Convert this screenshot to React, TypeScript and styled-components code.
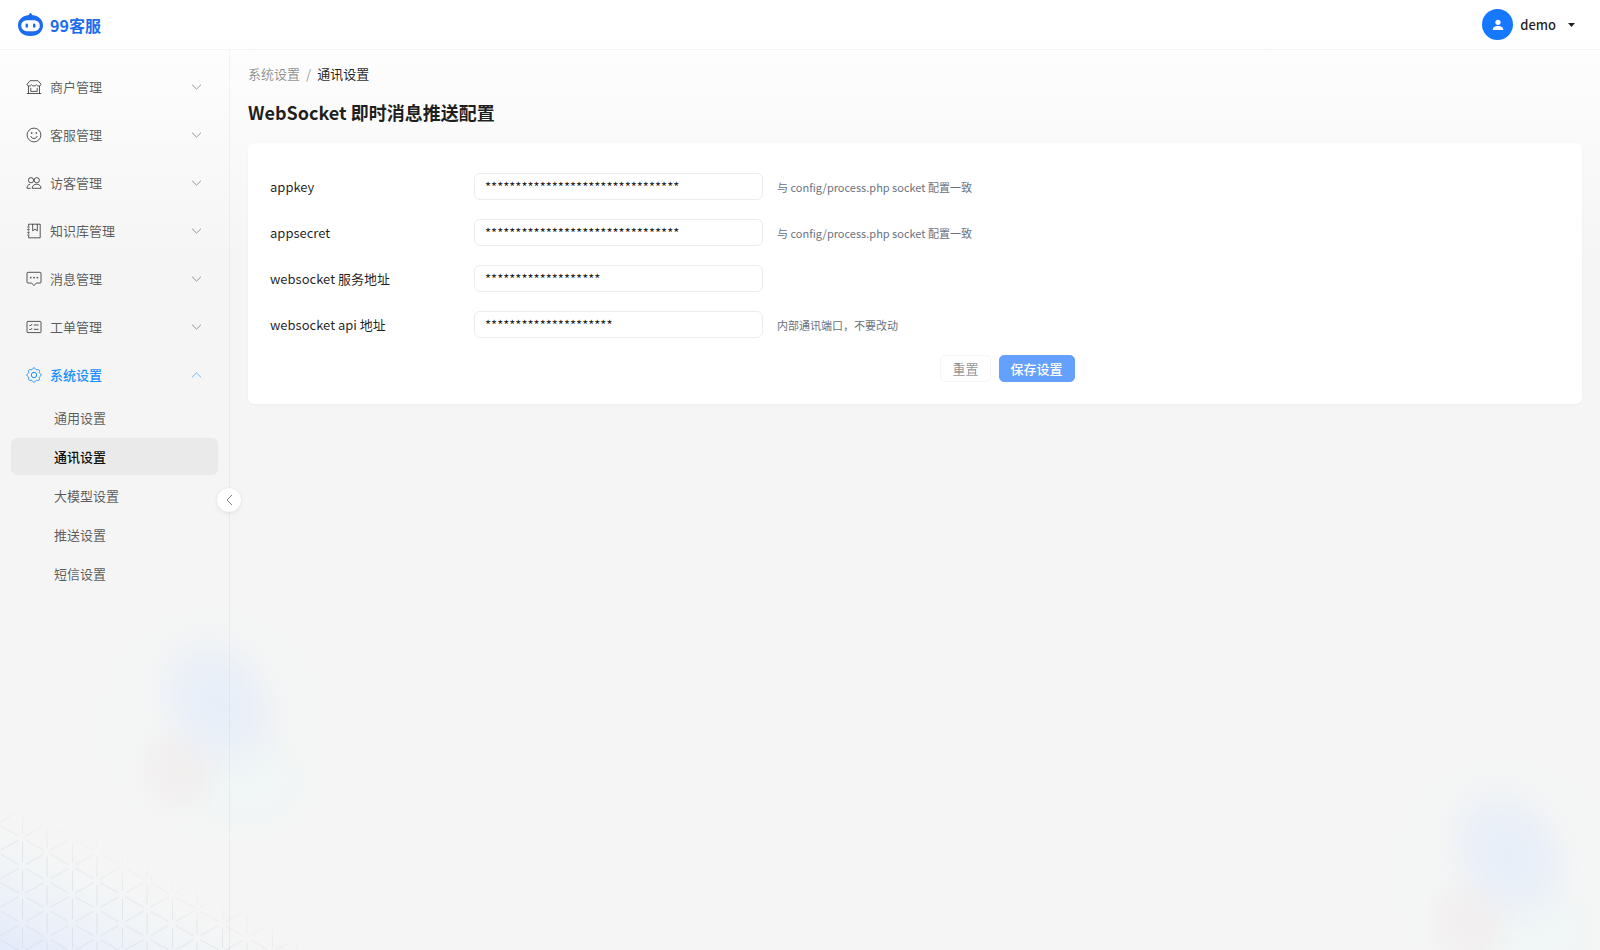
import React, { useState } from "react";
import styled, { createGlobalStyle, css } from "styled-components";

const GlobalStyle = createGlobalStyle`
  *, *::before, *::after { box-sizing: border-box; }
  body {
    margin: 0;
    background: #f5f5f5;
    color: rgba(0, 0, 0, 0.88);
    font-family: "Noto Sans CJK SC", "Noto Sans", sans-serif;
    font-size: 13px;
    line-height: 20px;
  }
  button, input { font: inherit; color: inherit; }
`;

const Page = styled.div`
  position: relative;
  min-height: 100vh;
  display: flex;
  flex-direction: column;
  isolation: isolate;
`;

/* ---------- decorative backdrop ---------- */

const Backdrop = styled.div`
  position: absolute;
  inset: 0;
  z-index: -1;
  overflow: hidden;
  pointer-events: none;
  background: linear-gradient(#ffffff, #f5f5f5 28%);
`;

const LeftGlow = styled.svg`
  position: absolute;
  left: 76px;
  bottom: 90px;
`;

const RightGlow = styled.svg`
  position: absolute;
  right: -40px;
  bottom: -61px;
`;

const CornerMesh = styled.svg`
  position: absolute;
  left: 0;
  bottom: 0;
`;

function GlowShapes({ id }: { id: string }) {
  const stops = (color: string, opacity: number) => (
    <>
      <stop offset="0" stopColor={color} stopOpacity={opacity} />
      <stop offset="0.45" stopColor={color} stopOpacity={opacity * 0.8} />
      <stop offset="0.75" stopColor={color} stopOpacity={opacity * 0.3} />
      <stop offset="1" stopColor={color} stopOpacity="0" />
    </>
  );
  return (
    <>
      <defs>
        <radialGradient id={`${id}-blue`}>{stops("#e6edf9", 0.85)}</radialGradient>
        <radialGradient id={`${id}-rose`}>{stops("#f1ecec", 0.7)}</radialGradient>
        <radialGradient id={`${id}-cyan`}>{stops("#eff6f6", 0.7)}</radialGradient>
        <radialGradient id={`${id}-halo`}>{stops("#f3f5f5", 0.8)}</radialGradient>
      </defs>
      <ellipse cx="136" cy="136" rx="134" ry="134" fill={`url(#${id}-halo)`} />
      <ellipse cx="168" cy="196" rx="80" ry="60" fill={`url(#${id}-cyan)`} />
      <ellipse cx="104" cy="182" rx="50" ry="54" fill={`url(#${id}-rose)`} />
      <ellipse cx="142" cy="116" rx="68" ry="86" transform="rotate(-30 142 116)" fill={`url(#${id}-blue)`} />
    </>
  );
}

function Decoration() {
  return (
    <Backdrop aria-hidden="true">
      <LeftGlow width="273" height="273" viewBox="0 0 273 273">
        <GlowShapes id="glow-left" />
      </LeftGlow>
      <RightGlow width="273" height="273" viewBox="0 0 273 273">
        <GlowShapes id="glow-right" />
      </RightGlow>
      <CornerMesh width="300" height="140" viewBox="0 0 300 140">
        <defs>
          <linearGradient id="mesh-tint" gradientUnits="userSpaceOnUse" x1="0" y1="140" x2="50" y2="32">
            <stop offset="0" stopColor="#e3eafa" />
            <stop offset="0.45" stopColor="#eaf0fa" stopOpacity="0.75" />
            <stop offset="0.75" stopColor="#f0f6f8" stopOpacity="0.5" />
            <stop offset="1" stopColor="#f5f5f5" stopOpacity="0" />
          </linearGradient>
          <linearGradient id="mesh-fade" gradientUnits="userSpaceOnUse" x1="80" y1="140" x2="126" y2="42">
            <stop offset="0" stopColor="#fff" />
            <stop offset="0.6" stopColor="#fff" stopOpacity="0.85" />
            <stop offset="1" stopColor="#fff" stopOpacity="0" />
          </linearGradient>
          <mask id="mesh-mask">
            <rect width="300" height="140" fill="url(#mesh-fade)" />
          </mask>
          <pattern id="mesh" width="50" height="28.5" patternUnits="userSpaceOnUse" patternTransform="translate(22 28)">
            <g stroke="#d8dde6" strokeWidth="0.9" strokeOpacity="0.85">
              <path d="M.5 4V24.5M25 18.3V28.5M25 0V10.2" />
              <path d="M3.5 2L21.5 12.2M28.5 12.2L46.5 2M3.5 26.5L21.5 16.3M28.5 16.3L46.5 26.5" />
            </g>
          </pattern>
        </defs>
        <path d="M0 10L300 110V140H0Z" fill="url(#mesh-tint)" />
        <rect width="300" height="140" fill="url(#mesh)" mask="url(#mesh-mask)" />
      </CornerMesh>
    </Backdrop>
  );
}

/* ---------- header ---------- */

const Header = styled.header`
  display: flex;
  align-items: center;
  justify-content: space-between;
  height: 50px;
  padding: 0 25px 0 18px;
  background: rgba(255, 255, 255, 0.6);
  border-bottom: 1px solid rgba(5, 5, 5, 0.04);
`;

const Brand = styled.a`
  display: flex;
  align-items: center;
  gap: 7px;
  color: #1a6cf0;
  font-size: 16px;
  font-weight: 700;
  line-height: 24px;
  text-decoration: none;
`;

const UserButton = styled.button`
  display: flex;
  align-items: center;
  gap: 7px;
  padding: 0;
  border: 0;
  background: none;
  font-weight: 500;
  cursor: pointer;
`;

const Avatar = styled.span`
  display: grid;
  place-items: center;
  width: 31px;
  height: 31px;
  border-radius: 50%;
  background: #1677ff;
`;

const Caret = styled.svg`
  margin-left: 5px;
`;

/* ---------- sidebar ---------- */

const Body = styled.div`
  flex: 1;
  display: flex;
`;

const Sidebar = styled.aside`
  position: relative;
  flex: none;
  width: 230px;
  padding: 13px 11px;
  border-right: 1px solid rgba(5, 5, 5, 0.04);
`;

const MenuList = styled.ul`
  margin: 0;
  padding: 0;
  list-style: none;
`;

const GroupButton = styled.button<{ $active?: boolean }>`
  display: flex;
  align-items: center;
  gap: 8px;
  width: 100%;
  height: 48px;
  padding: 0 16px 0 15px;
  border: 0;
  background: none;
  color: ${(p) => (p.$active ? "#1890ff" : "rgba(0, 0, 0, 0.65)")};
  font-weight: ${(p) => (p.$active ? 500 : 400)};
  text-align: left;
  cursor: pointer;
`;

const GroupName = styled.span`
  flex: 1;
`;

const Chevron = styled.svg`
  opacity: 0.6;
`;

const SubList = styled(MenuList)`
  display: grid;
  gap: 2px;
`;

const SubLink = styled.a<{ $active?: boolean }>`
  display: flex;
  align-items: center;
  height: 37px;
  padding-left: 43px;
  border-radius: 6px;
  color: rgba(0, 0, 0, 0.65);
  text-decoration: none;
  ${(p) =>
    p.$active &&
    css`
      background: #eaeaea;
      color: rgba(0, 0, 0, 0.95);
      font-weight: 500;
    `}
`;

const CollapseButton = styled.button`
  position: absolute;
  top: 438px;
  right: -12px;
  display: grid;
  place-items: center;
  width: 24px;
  height: 24px;
  padding: 0;
  border: 0;
  border-radius: 50%;
  background: #fff;
  color: rgba(0, 0, 0, 0.5);
  box-shadow: 0 2px 8px -2px rgba(0, 0, 0, 0.08), 0 1px 4px -1px rgba(25, 15, 15, 0.07),
    0 0 1px rgba(0, 0, 0, 0.08);
  cursor: pointer;
`;

/* ---------- content ---------- */

const Content = styled.main`
  flex: 1;
  min-width: 0;
  padding: 14px 18px 24px;
`;

const Breadcrumb = styled.nav`
  display: flex;
  gap: 6px;
  color: rgba(0, 0, 0, 0.45);
`;

const Crumb = styled.a`
  color: inherit;
  text-decoration: none;
`;

const CurrentCrumb = styled.span`
  color: rgba(0, 0, 0, 0.88);
`;

const Title = styled.h1`
  margin: 14px 0 17px;
  font-size: 18px;
  font-weight: 600;
  line-height: 28px;
`;

const Card = styled.form`
  padding: 30px 22px 22px;
  border-radius: 6px;
  background: #fff;
  box-shadow: 0 1px 2px rgba(0, 0, 0, 0.03), 0 1px 6px -1px rgba(0, 0, 0, 0.02);
`;

const Field = styled.div`
  display: flex;
  align-items: center;
  height: 27px;
  margin-bottom: 19px;
`;

const Label = styled.label`
  flex: none;
  width: 204px;
`;

const TextInput = styled.input`
  width: 289px;
  height: 27px;
  padding: 0 10px;
  border: 1px solid #ececec;
  border-radius: 6px;
  background: #fff;
  outline: none;
`;

const Hint = styled.span`
  margin-left: 14px;
  color: #6b7280;
  font-size: 11px;
`;

const Actions = styled.div`
  display: flex;
  justify-content: center;
  gap: 8px;
  margin: -2px 0 0 185px;
`;

const ActionButton = styled.button<{ $primary?: boolean }>`
  height: 27px;
  padding: 0 11px;
  border: 1px solid ${(p) => (p.$primary ? "#64a0fc" : "#f5f5f5")};
  border-radius: 5px;
  background: ${(p) => (p.$primary ? "#64a0fc" : "#fff")};
  color: ${(p) => (p.$primary ? "#fff" : "rgba(0, 0, 0, 0.45)")};
  font-weight: ${(p) => (p.$primary ? 500 : 400)};
  line-height: 18px;
  cursor: pointer;
`;

/* ---------- icons ---------- */

function Icon({ children }: { children: React.ReactNode }) {
  return (
    <svg width="16" height="16" viewBox="0 0 16 16" fill="none" stroke="currentColor" strokeWidth="1" strokeLinejoin="round" aria-hidden="true">
      {children}
    </svg>
  );
}

const ShopIcon = (
  <Icon>
    <path d="M4 1.7H12L15 5.2C15 6.4 14 7 12.8 7S10.8 6.6 10.4 5.8C10 6.6 9.2 7 8 7S6 6.6 5.6 5.8C5.2 6.6 4.4 7 3.2 7S1 6.4 1 5.2Z" />
    <path d="M2.5 7V14.5M13.5 7V14.5M.8 14.5H15.2M4.8 8.8V12.4H11.2V8.8" />
  </Icon>
);

const SmileIcon = (
  <Icon>
    <circle cx="8" cy="8" r="6.9" />
    <path d="M4.8 9C5.1 12.3 10.9 12.3 11.2 9" />
    <ellipse cx="5.7" cy="6.1" rx=".8" ry="1" fill="currentColor" stroke="none" />
    <ellipse cx="10.3" cy="6.1" rx=".8" ry="1" fill="currentColor" stroke="none" />
  </Icon>
);

const VisitorsIcon = (
  <Icon>
    <circle cx="5" cy="5.2" r="2.6" />
    <circle cx="10.8" cy="5.2" r="2.6" />
    <path d="M4 9.2C2.2 9.6 1 11 1 13.3H4.6M6.2 13.3C6.2 10.8 8 9.2 10.6 9.2S15 10.8 15 13.3Z" />
  </Icon>
);

const BookIcon = (
  <Icon>
    <path d="M2.6 3.2V1.2H14.2V14.8H2.6V12.8" />
    <path d="M6.7 1.2V7.8L9 6.2L11.3 7.8V1.2" />
    <path d="M2.6 4.8V5.7M2.6 7.5V8.4M2.6 10.2V11.1M1.2 4H3.6M1.2 6.6H3.6M1.2 9.3H3.6M1.2 12H3.6" />
  </Icon>
);

const MessageIcon = (
  <Icon>
    <path d="M1.9 1.3H14.1Q15 1.3 15 2.2V11.1Q15 12 14.1 12H10.4L8 14.6L5.6 12H1.9Q1 12 1 11.1V2.2Q1 1.3 1.9 1.3Z" />
    <g fill="currentColor" stroke="none">
      <circle cx="4.7" cy="6.6" r=".9" />
      <circle cx="8" cy="6.6" r=".9" />
      <circle cx="11.3" cy="6.6" r=".9" />
    </g>
  </Icon>
);

const TicketIcon = (
  <Icon>
    <rect x="1" y="2.4" width="14" height="11.2" rx=".8" />
    <path d="M3.4 6L4.4 7L6.2 5M3.4 10L4.4 11L6.2 9M7.8 6H12.6M7.8 10.3H12.6" />
  </Icon>
);

/* Eight rounded teeth around the hub */
const gearOutline =
  "M" +
  Array.from({ length: 96 }, (_, i) => {
    const angle = (i / 96) * Math.PI * 2;
    const radius = 6.5 + 0.7 * Math.cos(8 * angle);
    return `${(8 + radius * Math.cos(angle)).toFixed(2)} ${(8 + radius * Math.sin(angle)).toFixed(2)}`;
  }).join("L") +
  "Z";

const GearIcon = (
  <Icon>
    <circle cx="8" cy="8" r="2.7" />
    <path d={gearOutline} />
  </Icon>
);

function RobotLogo() {
  return (
    <svg width="25" height="25" viewBox="0 0 25 25" aria-hidden="true">
      <path d="M12.5 .8C13.2 1.5 13.9 2.2 14.2 3.1C20.3 3.7 25 7.8 25 13.2C25 19.3 20.4 24 12.5 24S0 19.3 0 13.2C0 7.8 4.7 3.7 10.8 3.1C11.1 2.2 11.8 1.5 12.5 .8Z" fill="#1a6cf0" />
      <rect x="3.2" y="8.2" width="18.6" height="11" rx="5.5" fill="#fff" />
      <rect x="7.6" y="11.4" width="2.4" height="4.4" rx="1.2" fill="#1a6cf0" />
      <rect x="15" y="11.4" width="2.4" height="4.4" rx="1.2" fill="#1a6cf0" />
    </svg>
  );
}

/* ---------- data ---------- */

const groups = [
  { name: "商户管理", icon: ShopIcon },
  { name: "客服管理", icon: SmileIcon },
  { name: "访客管理", icon: VisitorsIcon },
  { name: "知识库管理", icon: BookIcon },
  { name: "消息管理", icon: MessageIcon },
  { name: "工单管理", icon: TicketIcon },
  {
    name: "系统设置",
    icon: GearIcon,
    items: ["通用设置", "通讯设置", "大模型设置", "推送设置", "短信设置"],
  },
];

const currentItem = "通讯设置";

const initialFields = [
  { id: "appkey", label: "appkey", value: "*".repeat(32), hint: "与 config/process.php socket 配置一致" },
  { id: "appsecret", label: "appsecret", value: "*".repeat(32), hint: "与 config/process.php socket 配置一致" },
  { id: "ws-address", label: "websocket 服务地址", value: "*".repeat(19), hint: "" },
  { id: "ws-api", label: "websocket api 地址", value: "*".repeat(21), hint: "内部通讯端口，不要改动" },
];

export default function App() {
  const [values, setValues] = useState(initialFields.map((f) => f.value));

  return (
    <>
      <GlobalStyle />
      <Page>
        <Decoration />
        <Header>
          <Brand href="#">
            <RobotLogo />
            99客服
          </Brand>
          <UserButton type="button">
            <Avatar>
              <svg width="12" height="12" viewBox="0 0 12 12" fill="#fff" aria-hidden="true">
                <circle cx="6" cy="3.3" r="2.6" />
                <path d="M.7 11C.7 8 3 7 6 7S11.3 8 11.3 11Z" />
              </svg>
            </Avatar>
            demo
            <Caret width="7" height="4" viewBox="0 0 7 4" fill="currentColor" aria-hidden="true">
              <path d="M0 0H7L3.5 4Z" />
            </Caret>
          </UserButton>
        </Header>
        <Body>
          <Sidebar>
            <MenuList>
              {groups.map((group) => {
                const open = Boolean(group.items);
                return (
                  <li key={group.name}>
                    <GroupButton type="button" $active={open} aria-expanded={open}>
                      {group.icon}
                      <GroupName>{group.name}</GroupName>
                      <Chevron width="11" height="6" viewBox="0 0 11 6" fill="none" stroke="currentColor" aria-hidden="true">
                        <path d={open ? "M1 5.3L5.5 .9L10 5.3" : "M1 .7L5.5 5.1L10 .7"} />
                      </Chevron>
                    </GroupButton>
                    {group.items && (
                      <SubList>
                        {group.items.map((item) => (
                          <li key={item}>
                            <SubLink href="#" $active={item === currentItem}>
                              {item}
                            </SubLink>
                          </li>
                        ))}
                      </SubList>
                    )}
                  </li>
                );
              })}
            </MenuList>
            <CollapseButton type="button" aria-label="收起菜单">
              <svg width="7" height="12" viewBox="0 0 7 12" fill="none" stroke="currentColor" aria-hidden="true">
                <path d="M6 1L1 6L6 11" />
              </svg>
            </CollapseButton>
          </Sidebar>
          <Content>
            <Breadcrumb>
              <Crumb href="#">系统设置</Crumb>
              <span>/</span>
              <CurrentCrumb>通讯设置</CurrentCrumb>
            </Breadcrumb>
            <Title>WebSocket 即时消息推送配置</Title>
            <Card onSubmit={(e) => e.preventDefault()}>
              {initialFields.map((field, index) => (
                <Field key={field.id}>
                  <Label htmlFor={field.id}>{field.label}</Label>
                  <TextInput
                    id={field.id}
                    type="text"
                    value={values[index]}
                    onChange={(e) => setValues(values.map((v, i) => (i === index ? e.target.value : v)))}
                  />
                  {field.hint && <Hint>{field.hint}</Hint>}
                </Field>
              ))}
              <Actions>
                <ActionButton type="button" onClick={() => setValues(initialFields.map((f) => f.value))}>
                  重置
                </ActionButton>
                <ActionButton type="submit" $primary>
                  保存设置
                </ActionButton>
              </Actions>
            </Card>
          </Content>
        </Body>
      </Page>
    </>
  );
}
